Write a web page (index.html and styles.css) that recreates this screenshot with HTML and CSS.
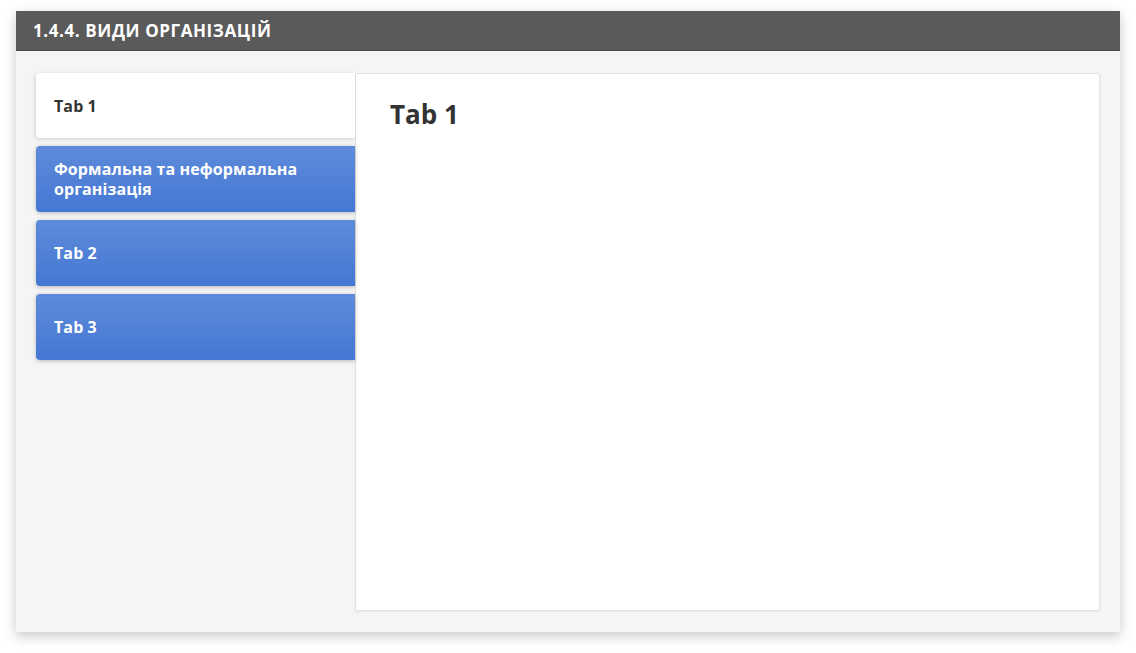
FILE: index.html
```html
<!DOCTYPE html>
<html lang="uk">
<head>
<meta charset="utf-8">
<title>1.4.4. Види організацій</title>
<link rel="stylesheet" href="styles.css">
</head>
<body>
<div class="card">
  <div class="card-header">1.4.4. ВИДИ ОРГАНІЗАЦІЙ</div>
  <div class="card-body">
    <div class="tabs">
      <div class="tab active">Tab 1</div>
      <div class="tab">Формальна та неформальна організація</div>
      <div class="tab">Tab 2</div>
      <div class="tab">Tab 3</div>
    </div>
    <div class="panel">
      <h2 class="panel-title">Tab 1</h2>
    </div>
  </div>
</div>
</body>
</html>
```
FILE: styles.css
```css
html, body {
  margin: 0;
  padding: 0;
  background: #ffffff;
  font-family: "Open Sans", "Noto Sans", sans-serif;
}

body {
  height: 653px;
}

.card {
  margin: 11px 16px 0 16px;
  width: 1104px;
  height: 621px;
  background: #f5f5f5;
  box-shadow: 0 4px 12px rgba(0, 0, 0, 0.22);
  display: flex;
  flex-direction: column;
}

.card-header {
  height: 40px;
  flex: 0 0 40px;
  background: #5a5a5a;
  color: #ffffff;
  font-weight: 700;
  font-size: 17px;
  letter-spacing: 0.6px;
  line-height: 40px;
  padding-left: 17px;
  box-sizing: border-box;
  border-bottom: 1px solid #4a4a4a;
}

.card-body {
  flex: 1;
  display: flex;
  padding: 22px 20px 21px 20px;
}

.tabs {
  width: 319px;
  display: flex;
  flex-direction: column;
  gap: 8px;
  position: relative;
  z-index: 2;
}

.tab {
  height: 66px;
  box-sizing: border-box;
  padding: 0 16px 0 18px;
  display: flex;
  align-items: center;
  font-size: 16px;
  font-weight: 700;
  letter-spacing: 0.1px;
  line-height: 20px;
  color: #ffffff;
  background: linear-gradient(to bottom, #5e8bda, #4577d4);
  border-radius: 4px 0 0 4px;
  box-shadow: 0 1px 4px rgba(0, 0, 0, 0.25);
}

.tab.active {
  height: 65px;
  background: #ffffff;
  color: #333333;
  box-shadow: -1px 1px 4px rgba(0, 0, 0, 0.15);
}

.panel {
  flex: 1;
  background: #ffffff;
  border: 1px solid #e2e2e2;
  border-radius: 0 3px 3px 0;
  padding: 20px 34px;
  box-shadow: 0 1px 3px rgba(0, 0, 0, 0.06);
}

.panel-title {
  margin: 0;
  font-size: 26px;
  font-weight: 700;
  color: #333333;
  line-height: 40px;
}
```
